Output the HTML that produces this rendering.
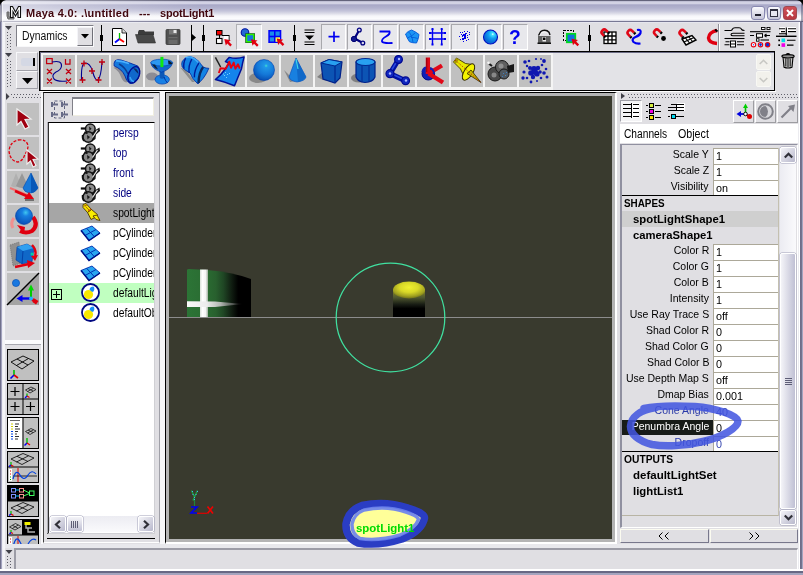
<!DOCTYPE html>
<html><head><meta charset="utf-8">
<style>
*{box-sizing:border-box;margin:0;padding:0}
html,body{width:803px;height:575px;overflow:hidden;background:#e0dfe3;font-family:"Liberation Sans",sans-serif;font-size:11px;color:#000}
.abs{position:absolute}
#win{position:absolute;left:0;top:0;width:803px;height:575px;background:#e0dfe3;overflow:hidden}
#title{left:0;top:0;width:803px;height:23px;background:linear-gradient(90deg,rgba(255,255,255,0.55) 0,rgba(255,255,255,0.35) 60px,rgba(255,255,255,0) 200px),linear-gradient(#64647c 0,#64647c 1px,#b0b0c8 1px,#d2d2e4 2px,#d2d2e4 3.500px,#b4b4d0 4.500px,#aaaac8 5.500px,#b2b2ce 8px,#c4c4da 11px,#dcdce8 13.500px,#f6f6fa 16px,#fcfcfe 19px,#e0e0ea 20.500px,#787894 21px,#787894 22px,#e6e6ee 22px,#e6e6ee 23px)}
#title span{position:absolute;top:7px;transform:scaleX(0.999);transform-origin:0 0;font-weight:bold;font-size:11px;color:#40060e;white-space:pre;letter-spacing:0.35px;text-shadow:1px 1px 0 rgba(255,255,255,0.5)}
.bl{position:absolute;left:0;top:22px;width:5px;height:553px;background:linear-gradient(90deg,#70708c 0,#70708c 1px,#a2a2be 1px,#a2a2be 2.500px,#ececf2 2.500px,#f8f8fb 4px,#f0f0f4 5px)}
.br{position:absolute;left:798px;top:22px;width:5px;height:553px;background:linear-gradient(90deg,#ececf0 0,#ececf0 1px,#fff 1px,#fff 2px,#6c6c88 2px,#74748e 3.500px,#a4a4c0 3.500px,#a4a4c0 5px)}
.bb{position:absolute;left:0;top:569px;width:803px;height:6px;background:linear-gradient(#fff 0,#fff 2px,#686884 2.500px,#686884 4px,#a4a4be 4.500px,#a4a4be 6px)}
.sunk{border:1px solid;border-color:#9d9da1 #fff #fff #9d9da1}
.rais{border:1px solid;border-color:#fff #9d9da1 #9d9da1 #fff}
.vsep{position:absolute;top:25px;width:1px;height:26px;background:#000}
.vsep i{position:absolute;left:-1px;top:10px;width:3px;height:6px;background:#000}
.sb{position:absolute;top:24px;width:25px;height:26px;background:#e8e8ec;border:1px solid;border-color:#a8a8ac #fff #fff #a8a8ac}
.shi{position:absolute;top:55px;width:32px;height:32px;background:#c0c0c0}
#vp{left:165px;top:92px;width:452px;height:452px;background:#b4b4b4;border:1px solid #000;border-right:2px solid #fff;border-bottom:2px solid #fff}
#vpi{left:169px;top:96px;width:443px;height:443px;background:#393a2e;overflow:hidden}
.orow{position:absolute;left:49px;width:105px;height:20px;white-space:nowrap;overflow:hidden}
.orow span{position:absolute;left:63.500px;top:3px;font-size:12px;transform:scaleX(0.855);transform-origin:0 0}
.cam{color:#000080}
.crow{position:absolute;left:622px;width:157px;height:16px}
.crow .l{position:absolute;right:70px;top:0px;font-size:11px;white-space:nowrap;transform:scaleX(0.955);transform-origin:100% 0}
.crow .v{position:absolute;left:91px;top:0;width:66px;height:16px;background:#fff;border:1px solid;border-color:#aca899 #aca899 #fff #aca899;border-bottom:0;font-size:11px;padding:1px 0 0 2px;line-height:12px}
.crow .v i{font-style:normal;display:inline-block;transform:scaleX(0.98);transform-origin:0 0}
.chd b{display:inline-block;transform-origin:0 0}
.chd{position:absolute;left:622px;width:157px;height:16px;font-weight:bold;font-size:11px;padding:1px 0 0 2px;white-space:nowrap}
.mn{transform-origin:0 0}
.tb{position:absolute;left:7px;width:32px;height:32px;background:#c0c0c0}
.ql{position:absolute;left:7px;width:32px;height:32px;background:#c0c0c0;border:1px solid #000;overflow:hidden}
svg{position:absolute;overflow:visible}
</style></head><body>
<div id="win">
<div id="title" class="abs"><span style="left:26px;letter-spacing:0.24px">Maya 4.0: .\untitled</span><span style="left:139px;letter-spacing:0.1px">---</span><span style="left:160px;letter-spacing:-0.2px">spotLight1</span></div>
<!-- maya icon -->
<svg style="left:6px;top:4px" width="17" height="16" viewBox="0 0 17 16"><path d="M1 12 L1 8 L3 8 L3 13 L8 13 L8 15 L2 15 Z" fill="#888" stroke="#666" stroke-width="1"/><path d="M4.5 13.5 V2.5 H6.5 L9.5 8 L12.5 2.5 H14.5 V13.5 H12 V7.5 L9.5 12 L7 7.5 V13.5 Z" fill="#fff" stroke="#101010" stroke-width="1.1"/></svg>
<!-- window buttons -->
<div class="abs" style="left:751px;top:6px;width:14px;height:14px;border-radius:3px;border:1px solid #8888b0;background:linear-gradient(#fafafe,#c4c4d8)"><div class="abs" style="left:3px;top:7px;width:6px;height:2px;background:#202030"></div></div>
<div class="abs" style="left:767px;top:6px;width:14px;height:14px;border-radius:3px;border:1px solid #8888b0;background:linear-gradient(#fafafe,#c4c4d8)"><div class="abs" style="left:2px;top:2px;width:8px;height:8px;border:1px solid #303040;border-top-width:2px;background:#e8e8f2"></div></div>
<div class="abs" style="left:783px;top:6px;width:14px;height:14px;border-radius:3px;border:1px solid #a04850;background:linear-gradient(#d05058,#b83840)"><svg style="left:2px;top:2px" width="8" height="8" viewBox="0 0 8 8"><path d="M1 1 L7 7 M7 1 L1 7" stroke="#fff" stroke-width="2"/></svg></div>

<!-- status line handle -->
<svg style="left:4px;top:24px" width="12" height="68" viewBox="0 0 12 68">
<path d="M1 2 H8 L4.5 6 Z" fill="#404048"/><path d="M1 29 H8 L4.5 33 Z" fill="#404048"/>
<g fill="#5c5c66" shape-rendering="crispEdges"><rect x="3" y="8" width="1" height="1"/><rect x="6" y="9.5" width="1" height="1"/><rect x="3" y="11" width="1" height="1"/><rect x="6" y="13" width="1" height="1"/><rect x="3" y="14" width="1" height="1"/><rect x="6" y="16" width="1" height="1"/><rect x="3" y="17" width="1" height="1"/><rect x="6" y="19" width="1" height="1"/><rect x="3" y="20" width="1" height="1"/><rect x="6" y="22" width="1" height="1"/><rect x="3" y="23" width="1" height="1"/><rect x="6" y="25" width="1" height="1"/>
<rect x="3" y="35" width="1" height="1"/><rect x="6" y="37" width="1" height="1"/><rect x="3" y="38" width="1" height="1"/><rect x="6" y="40" width="1" height="1"/><rect x="3" y="41" width="1" height="1"/><rect x="6" y="43" width="1" height="1"/><rect x="3" y="44" width="1" height="1"/><rect x="6" y="46" width="1" height="1"/><rect x="3" y="47" width="1" height="1"/><rect x="6" y="49" width="1" height="1"/><rect x="3" y="50" width="1" height="1"/><rect x="6" y="52" width="1" height="1"/><rect x="3" y="53" width="1" height="1"/><rect x="6" y="55" width="1" height="1"/><rect x="3" y="56" width="1" height="1"/><rect x="6" y="58" width="1" height="1"/><rect x="3" y="59" width="1" height="1"/><rect x="6" y="61" width="1" height="1"/><rect x="3" y="62" width="1" height="1"/></g></svg>

<!-- Dynamics combo -->
<div class="abs" style="left:16px;top:25px;width:78px;height:22px;background:#fff;border:1px solid;border-color:#808088 #f8f8fa #f8f8fa #808088"></div>
<div class="abs dyn" style="left:22px;top:29px;font-size:12px;color:#101010;transform:scaleX(0.865);transform-origin:0 0">Dynamics</div>
<div class="abs" style="left:77px;top:27px;width:16px;height:19px;background:#e0dfe3;border:1px solid;border-color:#f4f4f8 #707078 #707078 #f4f4f8"></div>
<svg style="left:81px;top:34px" width="8" height="5" viewBox="0 0 8 5"><path d="M0 0 H8 L4 4.500 Z" fill="#000"/></svg>

<div class="vsep" style="left:101px"><i></i></div>
<!-- new file -->
<svg style="left:112px;top:28px" width="15" height="18" viewBox="0 0 15 18"><path d="M0.5 0.5 H10 L14.500 5 V17.500 H0.5 Z" fill="#fff" stroke="#000"/><path d="M10 0.5 V5 H14.500" fill="#ddd" stroke="#000" stroke-width="0.8"/><path d="M7.500 5 V11" stroke="#00c000" stroke-width="1.300"/><path d="M7.500 11 L3 14.500" stroke="#0000ff" stroke-width="1.800"/><path d="M7.500 11 L12 14" stroke="#ff0000" stroke-width="1.800"/></svg>
<!-- folder -->
<svg style="left:135px;top:29px" width="21" height="15" viewBox="0 0 21 15"><path d="M3 3 L4 1 H9 L10 2.500 H19 V6 H5 L3 12 Z" fill="#3c3c3c"/><path d="M0.5 5.500 H18 L20.500 14 H3 Z" fill="#484848" stroke="#303030" stroke-width="0.6"/></svg>
<!-- floppy -->
<svg style="left:165px;top:29px" width="16" height="16" viewBox="0 0 16 16"><path d="M1 1.500 Q1 0.5 2 0.5 H14 Q15 0.5 15 1.500 V14.500 Q15 15.500 14 15.500 H2 Q1 15.500 1 14.500 Z" fill="#505050" stroke="#383838" stroke-width="0.8"/><rect x="4" y="0.5" width="8" height="5" fill="#777"/><rect x="8.500" y="1" width="3" height="3" fill="#e8e8e8"/><rect x="3.500" y="8" width="9" height="7" fill="#6a6a6a"/><rect x="3.500" y="9.500" width="9" height="1" fill="#444"/></svg>
<div class="vsep" style="left:191px"></div>
<svg style="left:192px;top:34px" width="4" height="8" viewBox="0 0 4 8"><path d="M0 0 L4 3.500 L0 7 Z" fill="#000"/></svg>
<div class="vsep" style="left:203px"><i></i></div>

<!-- select by hierarchy -->
<svg style="left:215px;top:29px" width="18" height="17" viewBox="0 0 18 17"><path d="M4.500 6 V10 M7 6.500 H14 V11" fill="none" stroke="#000" stroke-width="1.100"/><rect x="1.500" y="1.500" width="5.500" height="4.500" fill="#f00000" stroke="#000" stroke-width="1"/><rect x="1.500" y="9.500" width="5.500" height="5" fill="#fff" stroke="#000" stroke-width="1.100"/><rect x="9" y="7" width="4.500" height="4" fill="#fff"/><path transform="translate(9.3,10)" d="M0 0 L6.500 1.300 L4.600 2.800 L7.600 5.800 L6 7.400 L3 4.400 L1.500 6.500 Z" fill="#e00010"/></svg>
<!-- select by object (active) -->
<div class="abs" style="left:236px;top:24px;width:26px;height:26px;background:#ececf0;border:1px solid;border-color:#b0b0b4 #fff #fff #b0b0b4"></div>
<svg style="left:240px;top:28px" width="19" height="18" viewBox="0 0 19 18"><circle cx="5" cy="4.500" r="3.800" fill="#2468d4" stroke="#0010a0" stroke-width="1.100"/><rect x="5.300" y="5.300" width="9.700" height="9.700" fill="#083020"/><rect x="6.500" y="6.500" width="7.300" height="7.300" fill="#1478e0" stroke="#30f000" stroke-width="1.500"/><path transform="translate(11,11.3)" d="M0 0 L6.500 1.300 L4.600 2.800 L7.600 5.800 L6 7.400 L3 4.400 L1.500 6.500 Z" fill="#e00010"/></svg>
<!-- select by component -->
<svg style="left:268px;top:30px" width="18" height="16" viewBox="0 0 18 16"><rect x="0.300" y="0" width="13" height="13" fill="#0000f8"/><rect x="1.800" y="1.500" width="4.200" height="4.200" fill="#1c8ce8"/><rect x="7.500" y="1.500" width="4.200" height="4.200" fill="#1c8ce8"/><rect x="1.800" y="7.300" width="4.200" height="4.200" fill="#1c8ce8"/><rect x="7.500" y="7.300" width="4.500" height="4.500" fill="#ffff50"/><path transform="translate(8.7,8.5)" d="M0 0 L6.500 1.300 L4.600 2.800 L7.600 5.800 L6 7.400 L3 4.400 L1.500 6.500 Z" fill="#e00010"/></svg>
<div class="vsep" style="left:294px"><i></i></div>
<!-- menu icon -->
<svg style="left:304px;top:29px" width="11" height="17" viewBox="0 0 11 17"><path d="M0.5 1 H10.500 M0.5 3.500 H10.500 M0.5 13 H10.500 M0.5 15.500 H10.500" stroke="#000" stroke-width="1.200"/><path d="M1 6.500 H10 L5.500 11 Z" fill="#000"/></svg>
<!-- mask buttons -->
<div class="sb" style="left:321px"></div><div class="sb" style="left:347px"></div><div class="sb" style="left:373px"></div><div class="sb" style="left:399px"></div><div class="sb" style="left:425px"></div><div class="sb" style="left:451px"></div><div class="sb" style="left:477px"></div><div class="sb" style="left:503px"></div>
<svg style="left:328px;top:31px" width="12" height="12" viewBox="0 0 12 12"><path d="M6 0.5 V11 M0.5 5.700 H11.500" stroke="#0000f0" stroke-width="1.700" fill="none"/></svg>
<svg style="left:350px;top:28px" width="18" height="18" viewBox="0 0 18 18"><path d="M9 2.500 L4.500 10.500 L12 14.500" stroke="#000080" stroke-width="2.200" fill="none" stroke-linejoin="round"/><circle cx="9.300" cy="2" r="1.900" fill="#d8d8ec" stroke="#000080" stroke-width="1.300"/><circle cx="4" cy="11" r="2.700" fill="#101890" stroke="#000070" stroke-width="1"/><circle cx="12.800" cy="15" r="1.900" fill="#d8d8ec" stroke="#000080" stroke-width="1.300"/></svg>
<svg style="left:378px;top:30px" width="16" height="15" viewBox="0 0 16 15"><path d="M1.500 1.500 H11.500 Q12.500 4 8 6.500 Q3.500 9 4 11.500 Q5 13.500 14.500 13" stroke="#0000f0" stroke-width="1.800" fill="none"/></svg>
<svg style="left:404px;top:29px" width="17" height="16" viewBox="0 0 17 16"><path d="M1.500 5 Q4 2 7.500 1 Q11.500 2.500 15 5.500 Q14.500 10 12.500 14 Q8.500 14 5.500 12.800 Q3 9 1.500 5 Z" fill="#1c94f4" stroke="#0058d8" stroke-width="0.9"/><path d="M4.500 3 Q8 5.500 9 13.500 M11.500 3.500 Q8.500 7 3.500 9 M7 8.500 Q10 8 13.800 9.500" stroke="#0058d8" stroke-width="0.8" fill="none"/></svg>
<svg style="left:429px;top:28px" width="17" height="18" viewBox="0 0 17 18"><path d="M0.500 5 H16.500 M0.500 11 H16.500 M3.500 1 V16.500 M12.700 1 V16.500" stroke="#0000f0" stroke-width="1.400" fill="none"/><g fill="#0000f0"><rect x="2.500" y="0" width="2" height="2"/><rect x="11.700" y="0" width="2" height="2"/><rect x="2.500" y="15.500" width="2" height="2"/><rect x="11.700" y="15.500" width="2" height="2"/><rect x="0" y="4" width="2" height="2"/><rect x="15" y="4" width="2" height="2"/><rect x="0" y="10" width="2" height="2"/><rect x="15" y="10" width="2" height="2"/></g></svg>
<svg style="left:457px;top:29px" width="16" height="16" viewBox="0 0 16 16" shape-rendering="crispEdges"><g fill="#0000e8"><rect x="6" y="5" width="3" height="2"/><rect x="7" y="7" width="2" height="3"/><rect x="5" y="9" width="2" height="2"/><rect x="8" y="4" width="2" height="1"/><rect x="5" y="6" width="1" height="2"/><rect x="3" y="3" width="1" height="1"/><rect x="10" y="2" width="1" height="1"/><rect x="12" y="5" width="1" height="1"/><rect x="2" y="7" width="1" height="1"/><rect x="10" y="8" width="1" height="1"/><rect x="3" y="10" width="1" height="1"/><rect x="9" y="11" width="1" height="1"/><rect x="6" y="12" width="1" height="1"/><rect x="4" y="5" width="1" height="1"/><rect x="11" y="10" width="1" height="1"/><rect x="7" y="2" width="1" height="1"/><rect x="10" y="6" width="1" height="1"/><rect x="12" y="3" width="1" height="1"/><rect x="5" y="3" width="1" height="1"/></g></svg>
<svg style="left:483px;top:29px" width="16" height="16" viewBox="0 0 16 16"><defs><radialGradient id="sg" cx="0.66" cy="0.3" r="0.6"><stop offset="0" stop-color="#fff"/><stop offset="0.15" stop-color="#40e0ff"/><stop offset="0.5" stop-color="#10a0f0"/><stop offset="1" stop-color="#0868d8"/></radialGradient></defs><circle cx="7.500" cy="8" r="7" fill="url(#sg)" stroke="#0010c0" stroke-width="1.100"/></svg>
<div class="abs" style="left:509px;top:26px;font-weight:bold;font-size:20px;color:#0000f0;line-height:22px;transform:scaleX(0.96);transform-origin:0 0">?</div>
<!-- lock -->
<svg style="left:537px;top:29px" width="15" height="16" viewBox="0 0 15 16"><path d="M1.500 6.500 L3.500 2.800 Q5 1.300 7.500 1.300 Q10.500 1.300 12 3.200 L13 6" stroke="#101010" stroke-width="1.400" fill="none"/><path d="M3 6.500 L4.500 4 Q6 3 7.500 3 Q9.500 3 10.800 4.500" stroke="#f4f4f4" stroke-width="1" fill="none"/><rect x="1" y="7" width="12.500" height="7" fill="#606060"/><rect x="5.500" y="8" width="3.500" height="4.500" fill="#f0f0f0"/><rect x="6" y="8.500" width="2.500" height="2.500" fill="#000"/><rect x="0.500" y="13.500" width="13.500" height="1.500" fill="#101010"/></svg>
<!-- highlight select -->
<svg style="left:561px;top:29px" width="20" height="19" viewBox="0 0 20 19"><rect x="2.500" y="1.500" width="10" height="10" fill="none" stroke="#000" stroke-width="1" stroke-dasharray="2 1.330" shape-rendering="crispEdges"/><rect x="5.800" y="4.800" width="8.500" height="8.500" fill="#1070e0" stroke="#00d820" stroke-width="1.700"/><path transform="translate(10.5,9.8)" d="M0 0 L6.500 1.300 L4.600 2.800 L7.600 5.800 L6 7.400 L3 4.400 L1.500 6.500 Z" fill="#e00010"/></svg>
<div class="vsep" style="left:589px"><i></i></div>
<!-- snap grid -->
<svg style="left:599px;top:27px" width="18" height="19" viewBox="0 0 18 19"><rect x="5" y="5" width="12" height="11.500" fill="#fff" stroke="#000" stroke-width="1.300"/><path d="M9 5 V16.500 M13 5 V16.500 M5 9 H17 M5 12.800 H17" stroke="#000" stroke-width="1.300"/><g transform="translate(5.5,5.5) rotate(-45)"><path d="M-2.700 2.300 V-0.300 A2.700 2.700 0 0 1 2.700 -0.300 V2.300" stroke="#e00818" stroke-width="2.500" fill="none"/><path d="M-2.700 2.300 V4.200 M2.700 2.300 V4.200" stroke="#000" stroke-width="2.500"/></g></svg>
<!-- snap curve -->
<svg style="left:625px;top:27px" width="18" height="20" viewBox="0 0 18 20"><path d="M12 3 Q16.500 2 15.500 6 Q14.500 8.500 10.500 10 Q6 12 8.500 15 Q11 17 15.500 16.500" stroke="#0000f0" stroke-width="2.200" fill="none"/><g transform="translate(5.5,6.0) rotate(-45)"><path d="M-2.700 2.300 V-0.300 A2.700 2.700 0 0 1 2.700 -0.300 V2.300" stroke="#e00818" stroke-width="2.500" fill="none"/><path d="M-2.700 2.300 V4.200 M2.700 2.300 V4.200" stroke="#000" stroke-width="2.500"/></g></svg>
<!-- snap point -->
<svg style="left:652px;top:27px" width="16" height="16" viewBox="0 0 16 16"><g transform="translate(5.0,5.5) rotate(-45)"><path d="M-2.700 2.300 V-0.300 A2.700 2.700 0 0 1 2.700 -0.300 V2.300" stroke="#e00818" stroke-width="2.500" fill="none"/><path d="M-2.700 2.300 V4.200 M2.700 2.300 V4.200" stroke="#000" stroke-width="2.500"/></g><circle cx="11.500" cy="11.500" r="2.400" fill="#000"/></svg>
<!-- snap surface -->
<svg style="left:677px;top:27px" width="20" height="19" viewBox="0 0 20 19"><path d="M5 12 L15 8.500 L19 13 L9 18 Z" fill="#fff" stroke="#000" stroke-width="1.400"/><path d="M8.500 11 L12.500 16 M11.500 9.500 L15.500 14.500 M7 15 L17 10.500" stroke="#000" stroke-width="1.200"/><g transform="translate(5.5,6.0) rotate(-45)"><path d="M-2.700 2.300 V-0.300 A2.700 2.700 0 0 1 2.700 -0.300 V2.300" stroke="#e00818" stroke-width="2.500" fill="none"/><path d="M-2.700 2.300 V4.200 M2.700 2.300 V4.200" stroke="#000" stroke-width="2.500"/></g></svg>
<!-- snap live (cut) -->
<svg style="left:706px;top:28px" width="12" height="18" viewBox="0 0 12 18"><path d="M11 2.500 Q3 4 2.500 10 Q3 15 11 15.500" stroke="#e00010" stroke-width="3.400" fill="none"/><path d="M9 1.500 L11.500 3.500" stroke="#000" stroke-width="2"/></svg>
<div class="abs" style="left:718px;top:24px;width:1px;height:27px;background:#909098"></div>
<div class="abs" style="left:719px;top:24px;width:1px;height:27px;background:#fff"></div>
<!-- 3 right icons -->
<svg style="left:724px;top:27px" width="21" height="21" viewBox="0 0 21 21"><path d="M0.500 3.500 H7 Q8 3.300 8.500 2 Q9 0.700 11 0.700 H15 Q17 0.700 17.300 2 Q17.800 3.500 20.500 3.500" stroke="#000" stroke-width="1.100" fill="none"/><path d="M20.500 6.300 H9 Q7 6.300 7 7.500 Q7 8.800 9 8.800 H20.500" stroke="#000" stroke-width="1.100" fill="none"/><path d="M0.500 11.500 H20.500" stroke="#000" stroke-width="1.100"/><rect x="6.500" y="14" width="5" height="6" fill="#fff" stroke="#000" stroke-width="1"/><path d="M1.500 14.700 H5.500 M0.500 17.800 H5.500 M13 14.700 H20 M13 17.800 H20 M6.500 17 H11.500" stroke="#000" stroke-width="1.100"/></svg>
<svg style="left:750px;top:27px" width="21" height="21" viewBox="0 0 21 21"><rect x="11.500" y="0.500" width="3.500" height="2" fill="#fff" stroke="#000" stroke-width="0.9"/><rect x="17" y="0.500" width="3" height="2" fill="#fff" stroke="#000" stroke-width="0.9"/><path d="M0 4.700 H20.500" stroke="#000" stroke-width="1.100"/><path d="M0 8.500 H4 M14.500 8.500 H20 M14.500 8.500 L16.500 7 M14.500 8.500 L16.500 10" stroke="#000" stroke-width="1.100" fill="none"/><rect x="6.500" y="6.700" width="6" height="3.600" fill="#fff" stroke="#000" stroke-width="1"/><rect x="6.500" y="11.700" width="2.500" height="2.500" fill="#fff" stroke="#000" stroke-width="0.900"/><path d="M10.500 13 H19" stroke="#000" stroke-width="1.100"/><circle cx="3.500" cy="17.700" r="2.200" fill="#fff" stroke="#e80010" stroke-width="1.100"/><circle cx="3.500" cy="17.700" r="0.700" fill="#2060ff"/><circle cx="10.500" cy="17.700" r="2.200" fill="#a0c8ff" stroke="#e80010" stroke-width="1.100"/><path d="M10.500 16.200 V19.200 M9 17.700 H12" stroke="#0030e0" stroke-width="0.900"/><circle cx="17.600" cy="17.700" r="2.200" fill="#0030e0" stroke="#e80010" stroke-width="1.100"/></svg>
<svg style="left:776px;top:27px" width="21" height="21" viewBox="0 0 21 21"><rect x="4" y="0" width="16" height="6" fill="#fff"/><path d="M3 1.800 H9 M12 1.800 H20 M5 4.600 H9 M12 4.600 H20 M3 6.800 H10" stroke="#000" stroke-width="1.100"/><path d="M10.300 0.500 V8.500" stroke="#000" stroke-width="1.200"/><path d="M0 9.300 H20.500" stroke="#000" stroke-width="1.400"/><rect x="5.500" y="11.500" width="3.600" height="3.600" fill="#00e0e8"/><rect x="5.500" y="16.300" width="3.600" height="3.600" fill="#f000e8"/><rect x="2.300" y="12.500" width="1.700" height="1.700" fill="#000"/><rect x="2.300" y="17.300" width="1.700" height="1.700" fill="#000"/><path d="M11 13.300 H19.500 M11 18.100 H17.500" stroke="#000" stroke-width="1.100"/></svg>
<!-- shelf left buttons -->
<div class="abs" style="left:16px;top:52px;width:22px;height:19px;background:#e0dfe3;border:1px solid;border-color:#f8f8fa #a0a0a8 #a0a0a8 #f8f8fa"></div>
<div class="abs" style="left:21px;top:58px;width:14px;height:8px;background:#d4d8e4;border-right:2px solid #000;border-radius:2px 0 0 2px"></div>
<div class="abs" style="left:16px;top:71px;width:22px;height:18px;background:#e0dfe3;border:1px solid;border-color:#f8f8fa #a0a0a8 #a0a0a8 #f8f8fa"></div>
<svg style="left:22px;top:78px" width="11" height="6" viewBox="0 0 11 6"><path d="M0 0 H11 L5.500 6 Z" fill="#000"/></svg>
<!-- shelf frame -->
<div class="abs" style="left:39px;top:51px;width:736px;height:40px;background:#e3e3e7;border:1px solid #000"></div><div class="abs" style="left:40px;top:52px;width:734px;height:1px;background:#6c6c84"></div><div class="abs" style="left:40px;top:52px;width:1px;height:38px;background:#6c6c84"></div>
<div class="abs" style="left:41px;top:53px;width:512px;height:37px;background:#f4f4f4"></div>
<div class="abs" style="left:40px;top:91px;width:736px;height:1px;background:#fff"></div>
<!-- icons -->
<div class="shi" style="left:43px"><svg width="32" height="32" viewBox="0 0 32 32"><g stroke="#c00010" stroke-width="1.250" fill="none"><rect x="3.600" y="3.600" width="5.600" height="5"/><path d="M22.500 4 V9 H27 V4"/><path d="M4 14 L9 19 M9 14 L4 19 M23 14 L28 19 M28 14 L23 19 M4 23.500 L9 28.500 M9 23.500 L4 28.500 M23 23.500 L28 28.500 M28 23.500 L23 28.500"/></g><path d="M9 7 Q19 5 18.500 11 Q18 15 13 17 Q8 20 11 24 Q14 27 24 26" stroke="#000090" stroke-width="1.100" fill="none"/></svg></div>
<div class="shi" style="left:77px"><svg width="32" height="32" viewBox="0 0 32 32"><path d="M4.500 25 Q4 8 8 8 Q13 8 15.500 16 Q18 26 21 25 Q24 22 25 7" stroke="#000090" stroke-width="1.100" fill="none"/><g stroke="#c00010" stroke-width="1.300"><path d="M4 8.500 H10 M7 5.500 V11.500 M12 16 H18 M15 13 V19 M2.500 25 H8.500 M5.500 22 V28 M18.500 25 H24.500 M21.500 22 V28 M22 7 H28 M25 4 V10"/></g></svg></div>
<div class="shi" style="left:111px"><svg width="32" height="32" viewBox="0 0 32 32"><path d="M2.400 12.800 Q8 16 10 22 Q12 27 15.400 27.600 L19 26 L8 11 Z" fill="#8c8c94"/><path d="M4.100 5.800 Q6 4 10 5 Q18 7.500 26.800 11 Q30 17 27 24 Q24 29 19 28.500 Q15 26 14 21 Q11 14 3.200 11 Q2.500 8 4.100 5.800 Z" fill="#1478dc" stroke="#0028a0" stroke-width="0.9"/><path d="M5 6 Q10 5.500 18 8.500" stroke="#48b0ff" stroke-width="1.700" fill="none"/><path d="M8 9 Q14 12 17 19" stroke="#0c3c90" stroke-width="1.500" fill="none"/><ellipse cx="22.800" cy="19.800" rx="5.300" ry="8.600" fill="#1068cc" stroke="#000c90" stroke-width="1.400" transform="rotate(24 22.800 19.800)"/><path d="M22 13 Q27 13 27.500 19 Q25 17 22 13 Z" fill="#0a2c68"/><path d="M19 22 Q20 26 23 26.500" stroke="#38a0f4" stroke-width="1.500" fill="none"/></svg></div>
<div class="shi" style="left:145px"><svg width="32" height="32" viewBox="0 0 32 32"><ellipse cx="7" cy="21.500" rx="6" ry="4" fill="#8c8c94"/><ellipse cx="17.200" cy="24.500" rx="7.200" ry="4.600" fill="#1880e4" stroke="#0040b0" stroke-width="0.700"/><path d="M14.500 16 L14.800 23 Q17 24.500 19.500 23 L19.500 16 Z" fill="#0c58b8"/><path d="M5.800 7.600 Q6.500 14 16.500 17.200 Q26.500 14 27.600 7.600 Z" fill="#1068cc" stroke="#0038a8" stroke-width="0.700"/><ellipse cx="16.700" cy="7.600" rx="10.900" ry="3.400" fill="#2c98f0" stroke="#0048b8" stroke-width="0.700"/><path d="M7 9.500 Q9 13 13 14.500 L10 9.500 Z" fill="#0a2440"/><path d="M23 5.500 Q27 6.500 27.300 9 L23.500 9.500 Z" fill="#0a1c30"/><rect x="15.400" y="1.900" width="3" height="10.200" fill="#10e810"/><path d="M19 22 Q20.500 26 22.500 28" stroke="#0030a0" stroke-width="1" fill="none"/></svg></div>
<div class="shi" style="left:179px"><svg width="32" height="32" viewBox="0 0 32 32"><path d="M1.500 12.800 L13 27 L16 27 L6 14 Z" fill="#8c8c8c"/><path d="M3.200 6.300 Q6 2 11.100 1.500 Q16 2.500 19.800 6.300 Q22 9.500 24.200 12 Q27 13.500 29.800 13.300 Q27.500 19 24.200 23.300 Q21.500 26.500 18.900 29 Q16 26 13.700 23.300 L11.100 18 Q6 15.500 3.200 12 Q2.300 9 3.200 6.300 Z" fill="#1484e4" stroke="#0030a8" stroke-width="0.9"/><path d="M6 3 Q9 1.800 12 2 Q17 4 21 9" stroke="#40a8f8" stroke-width="1.600" fill="none"/><path d="M6.700 3.200 Q4 8 5 13.700 M12.800 4.100 Q9 11 10.200 18 M20.200 7.600 Q15 15 15.400 22.400" stroke="#001c98" stroke-width="1.400" fill="none"/><path d="M24.200 12 Q20 17 19.500 28" stroke="#0a2860" stroke-width="2.400" fill="none"/></svg></div>
<div class="shi" style="left:213px"><svg width="32" height="32" viewBox="0 0 32 32"><path d="M16.300 2.400 Q24 4.500 31.100 1.900 Q29.500 8 28.500 13.700 Q25 22 21.500 30.700 Q12 27 2.400 24.600 Q8 20 11.500 15 Q15 10 16.300 7.600 Q14 7.500 12.400 6.700 Q14.500 4 16.300 2.400 Z" fill="#1484ec" stroke="#001098" stroke-width="1.500" stroke-linejoin="round"/><path d="M2.400 2.400 L7.600 12" stroke="#202020" stroke-width="1.500"/><path d="M5.800 18 L7.600 13.200 L12.800 13.700 L16.300 6.700 L18 12.800 L20.700 7.600 L22.400 13.700 L25 9.300 L26.800 13.700" stroke="#e80010" stroke-width="1.900" fill="none" stroke-linejoin="round"/><g fill="#70d0ff"><rect x="12" y="17" width="1" height="1"/><rect x="14" y="19" width="1" height="1"/><rect x="11" y="20" width="1" height="1"/><rect x="16" y="18" width="1" height="1"/><rect x="13" y="22" width="1" height="1"/><rect x="10" y="18.500" width="1" height="1"/></g></svg></div>
<div class="shi" style="left:247px"><svg width="32" height="32" viewBox="0 0 32 32"><defs><radialGradient id="g7" cx="0.6" cy="0.3" r="0.7"><stop offset="0" stop-color="#40e0d0"/><stop offset="0.12" stop-color="#2098e8"/><stop offset="0.6" stop-color="#1478d8"/><stop offset="1" stop-color="#0850b4"/></radialGradient></defs><ellipse cx="11" cy="23" rx="9" ry="5" fill="#888"/><circle cx="17" cy="15" r="10.500" fill="url(#g7)" stroke="#0040b0" stroke-width="0.6"/></svg></div>
<div class="shi" style="left:281px"><svg width="32" height="32" viewBox="0 0 32 32"><path d="M3 15 L14 26 L9 27 Z" fill="#888"/><path d="M15 3 L25 22 Q24 26 16 27 Q9 26 8 22 Z" fill="#1880e0" stroke="#0048b8" stroke-width="0.6"/><path d="M15 3 L25 22 Q22 26 17 27 Z" fill="#1068c8"/><path d="M15 4 L17 14" stroke="#40d8e8" stroke-width="1.200"/></svg></div>
<div class="shi" style="left:315px"><svg width="32" height="32" viewBox="0 0 32 32"><path d="M2 22 L8 17 L18 27 L8 25 Z" fill="#808080"/><path d="M6 8 L14 4.500 L27 7 L25 23 L20 28 L8 24 Z" fill="#0c54b4" stroke="#002088" stroke-width="1.200"/><path d="M6 8 L14 4.500 L27 7 L20 11 Z" fill="#28a0f0" stroke="#002890" stroke-width="1"/><path d="M20 11 L20 28" stroke="#002890" stroke-width="1.200"/></svg></div>
<div class="shi" style="left:349px"><svg width="32" height="32" viewBox="0 0 32 32"><ellipse cx="10" cy="23" rx="8" ry="4.500" fill="#808080"/><path d="M7 7 V22 Q9 27 16 27.500 Q24 27 26 22 V7 Z" fill="#0c54b4" stroke="#002088" stroke-width="1.200"/><path d="M13 10 V27 M20 10 V27" stroke="#002890" stroke-width="1"/><ellipse cx="16.500" cy="7" rx="9.500" ry="3.500" fill="#28a0f0" stroke="#002890" stroke-width="1.200"/></svg></div>
<div class="shi" style="left:383px"><svg width="32" height="32" viewBox="0 0 32 32"><path d="M15.500 4.500 L7 18.700 L22.600 25.800" stroke="#0010a0" stroke-width="5.200" fill="none" stroke-linejoin="round"/><path d="M14 6 L7.500 17 M9 19 L21 24.500" stroke="#2848e0" stroke-width="1.500"/><circle cx="15.500" cy="4.500" r="3.900" fill="#1028c0" stroke="#000890" stroke-width="1.200"/><circle cx="16" cy="4" r="1.200" fill="#a8b4ff"/><circle cx="7" cy="18.700" r="4" fill="#1028c0" stroke="#000890" stroke-width="1.200"/><circle cx="7" cy="18.500" r="1.200" fill="#a8b4ff"/><circle cx="22.600" cy="25.800" r="3.900" fill="#1028c0" stroke="#000890" stroke-width="1.200"/><circle cx="23" cy="25.500" r="1.200" fill="#a8b4ff"/></svg></div>
<div class="shi" style="left:417px"><svg width="32" height="32" viewBox="0 0 32 32"><circle cx="11.300" cy="18.700" r="6.300" fill="#1020b8" stroke="#000880" stroke-width="1"/><path d="M10.900 2.500 V19" stroke="#e00818" stroke-width="4.300"/><path d="M11.500 18.500 L25 10.500" stroke="#e00818" stroke-width="4.300"/><path d="M11.500 18.500 L26 27.500" stroke="#e00818" stroke-width="4.300"/><path d="M9.700 3 V17" stroke="#a00010" stroke-width="1.200"/><path d="M5.500 17 Q6 13 9 12.500 M13.500 13 Q17 15 17 19" stroke="#1020b8" stroke-width="2" fill="none"/></svg></div>
<div class="shi" style="left:451px"><svg width="32" height="32" viewBox="0 0 32 32"><path d="M2.500 7 L5.500 3 L14.500 8.500 Q18 9 22 9.800 L12.500 24.800 Q12.500 18 9.500 14 Z" fill="#e8e800" stroke="#403800" stroke-width="0.9"/><path d="M2.500 7 L5.500 3 L8 4.500 L5 8.500 Z" fill="#a89800"/><ellipse cx="17.500" cy="17" rx="4.300" ry="9.300" fill="#f4f400" stroke="#302800" stroke-width="1" transform="rotate(33 17.500 17)"/><path d="M16 18.500 L20 15 L30 27.500 Z" fill="#c8b800" stroke="#302800" stroke-width="0.8"/><path d="M4 5 L29.500 27" stroke="#c02000" stroke-width="0.8" stroke-dasharray="1.500 1.500"/></svg></div>
<div class="shi" style="left:485px"><svg width="32" height="32" viewBox="0 0 32 32"><circle cx="10" cy="19" r="7" fill="#484848" stroke="#181818"/><circle cx="17" cy="12" r="6.500" fill="#606060" stroke="#181818"/><circle cx="19" cy="19" r="5" fill="#505860" stroke="#181818"/><circle cx="9" cy="20" r="2.500" fill="#888"/><circle cx="16" cy="11" r="2.500" fill="#909090"/><path d="M22 11 L29 9 L29 17 L23 18 Z" fill="#181818"/><path d="M3 8 L7 11" stroke="#181818" stroke-width="2"/><circle cx="3.500" cy="8" r="1.400" fill="#f4f4f4"/><g fill="#4080c0"><rect x="18" y="18" width="1" height="1"/><rect x="20" y="20" width="1" height="1"/><rect x="17" y="21" width="1" height="1"/><rect x="21" y="17" width="1" height="1"/></g></svg></div>
<div class="shi" style="left:519px"><svg width="32" height="32" viewBox="0 0 32 32"><g fill="#1018b0"><circle cx="15" cy="14" r="3"/><circle cx="12" cy="18" r="2.800"/><circle cx="18" cy="19" r="2.600"/><circle cx="14" cy="22" r="2.200"/><circle cx="19" cy="13" r="2.200"/><circle cx="11" cy="13" r="2"/><circle cx="16" cy="17" r="3"/><circle cx="6" cy="7" r="1.800"/><circle cx="10" cy="6" r="1.300"/><circle cx="17" cy="4" r="1.100"/><circle cx="25" cy="6" r="1.900"/><circle cx="23" cy="10" r="1.300"/><circle cx="27" cy="14" r="1.300"/><circle cx="25" cy="18" r="1.800"/><circle cx="28" cy="22" r="1.500"/><circle cx="22" cy="23" r="1.300"/><circle cx="5" cy="17" r="1.600"/><circle cx="4" cy="23" r="1.700"/><circle cx="8" cy="23" r="1.300"/><circle cx="12" cy="27" r="1.400"/><circle cx="18" cy="26" r="1"/><circle cx="21" cy="17" r="1.800"/><circle cx="8" cy="11" r="1.200"/><circle cx="22" cy="4" r="0.9"/></g></svg></div>
<!-- scroll buttons -->
<div class="abs" style="left:756px;top:54px;width:15px;height:16px;background:#f2f1ec;border:1px solid #f8f8f4;border-radius:2px"></div>
<svg style="left:759px;top:59px" width="9" height="6" viewBox="0 0 9 6"><path d="M0.7 5 L4.500 1.300 L8.300 5" stroke="#c8c8c4" stroke-width="1.600" fill="none"/></svg>
<div class="abs" style="left:756px;top:71px;width:15px;height:16px;background:#f2f1ec;border:1px solid #f8f8f4;border-radius:2px"></div>
<svg style="left:759px;top:77px" width="9" height="6" viewBox="0 0 9 6"><path d="M0.7 1 L4.500 4.700 L8.300 1" stroke="#c8c8c4" stroke-width="1.600" fill="none"/></svg>
<!-- trash -->
<svg style="left:781px;top:52px" width="14" height="17" viewBox="0 0 14 17"><path d="M2 5 L3 15.200 Q7 16.800 11 15.200 L12 5 Z" fill="#c4c4c4" stroke="#000" stroke-width="1.100"/><path d="M4.800 6.500 V14.500 M7 6.500 V15 M9.200 6.500 V14.500" stroke="#202020" stroke-width="1.100"/><ellipse cx="7" cy="4.300" rx="6.200" ry="1.700" fill="#909090" stroke="#000" stroke-width="1.100"/><path d="M5 2.600 Q7 0.300 9 2.600" stroke="#000" stroke-width="1.100" fill="none"/></svg>
<!-- main separator lines under shelf -->
<!-- toolbox handle -->
<svg style="left:5px;top:93px" width="38" height="8" viewBox="0 0 38 8"><path d="M1 0 L4.500 3.500 L1 7 Z" fill="#404048"/><g fill="#5c5c66" shape-rendering="crispEdges"><rect x="6" y="1" width="1" height="1"/><rect x="9" y="1" width="1" height="1"/><rect x="12" y="1" width="1" height="1"/><rect x="15" y="1" width="1" height="1"/><rect x="18" y="1" width="1" height="1"/><rect x="21" y="1" width="1" height="1"/><rect x="24" y="1" width="1" height="1"/><rect x="27" y="1" width="1" height="1"/><rect x="30" y="1" width="1" height="1"/><rect x="33" y="1" width="1" height="1"/><rect x="8" y="4" width="1" height="1"/><rect x="11" y="4" width="1" height="1"/><rect x="14" y="4" width="1" height="1"/><rect x="17" y="4" width="1" height="1"/><rect x="20" y="4" width="1" height="1"/><rect x="23" y="4" width="1" height="1"/><rect x="26" y="4" width="1" height="1"/><rect x="29" y="4" width="1" height="1"/><rect x="32" y="4" width="1" height="1"/><rect x="35" y="4" width="1" height="1"/></g></svg>
<div class="abs" style="left:41px;top:93px;width:2px;height:452px;background:#f8f8fa"></div>
<!-- tools -->
<div class="tb" style="top:103px"><svg width="32" height="32" viewBox="0 0 32 32"><path d="M10 6 L10 22 L14 18.500 L18 26 L22 24 L18 16.500 L24 16 Z" fill="#a00010" stroke="#f0f0f0" stroke-width="1.200"/></svg></div>
<div class="tb" style="top:137px"><svg width="32" height="32" viewBox="0 0 32 32"><path d="M11 3 Q20 2 21 9 Q21 13 18 17 Q16 24 11 25 Q3 24 2 14 Q3 5 11 3 Z" fill="none" stroke="#e00010" stroke-width="1.300" stroke-dasharray="3 1.500"/><path d="M20 13 L20 27 L23.500 24 L26 30 L29 28.500 L26 22.500 L31 22 Z" fill="#a00010" stroke="#f0f0f0" stroke-width="1.100"/></svg></div>
<div class="tb" style="top:171px"><svg width="32" height="32" viewBox="0 0 32 32"><path d="M9 2 L14 14 Q10 18 4 15 Z" fill="#b0b0b0"/><path d="M15 2 L21 15 Q15 19 9 15 Z" fill="#989898"/><path d="M24 2 L31 17 Q28 22 22 22 Q17 21 16 17 Z" fill="#1878d8" stroke="#0048b0" stroke-width="0.6"/><path d="M24 2 L31 17 Q28 22 24 22 Z" fill="#0858b8"/><path d="M3 17 L20 24" stroke="#f07070" stroke-width="2"/><path d="M8 20 L22 26" stroke="#e00010" stroke-width="2.600"/><path d="M17 28 L27 28 L22 21 Z" fill="#e00010"/><path d="M18 29 H27" stroke="#202020" stroke-width="1"/></svg></div>
<div class="tb" style="top:205px"><svg width="32" height="32" viewBox="0 0 32 32"><defs><radialGradient id="gr" cx="0.6" cy="0.3" r="0.7"><stop offset="0" stop-color="#40c8f0"/><stop offset="0.3" stop-color="#1880e0"/><stop offset="1" stop-color="#0850b8"/></radialGradient></defs><path d="M7 13 Q3 18 6 23" stroke="#f09090" stroke-width="3" fill="none"/><path d="M26 12 Q32 20 25 26 Q19 29 13 26" stroke="#e00010" stroke-width="4" fill="none"/><path d="M10 20 L17 29 L18 22 Z" fill="#e00010"/><circle cx="17" cy="11" r="8.500" fill="url(#gr)" stroke="#0040a8" stroke-width="0.6"/></svg></div>
<div class="tb" style="top:239px"><svg width="32" height="32" viewBox="0 0 32 32"><path d="M3 6 L12 3 L14 24 L6 27 Z" fill="#909090" stroke="#606060" stroke-width="0.6" stroke-dasharray="1 1"/><path d="M10 8 L20 5 L27 9 L25 23 L15 25 L9 21 Z" fill="#1068c8" stroke="#0038a0" stroke-width="0.6"/><path d="M10 8 L20 5 L27 9 L16 12 Z" fill="#30a0f0"/><path d="M16 12 L15 25" stroke="#0038a0" stroke-width="0.8"/><path d="M25 6 Q30 11 28 17" stroke="#e00010" stroke-width="2.400" fill="none"/><path d="M24 17 L31 16 L28 22 Z" fill="#e00010"/><path d="M8 28 L22 25" stroke="#e00010" stroke-width="2.600"/><path d="M20 21 L28 24 L21 29 Z" fill="#e00010"/><circle cx="25" cy="15" r="1.500" fill="#00d0a0"/></svg></div>
<div class="tb" style="top:273px"><svg width="32" height="32" viewBox="0 0 32 32"><path d="M0 32 L32 0 V32 Z" fill="#a4a4a4"/><path d="M0 32 L32 0" stroke="#000" stroke-width="1.400"/><circle cx="9" cy="10" r="3.600" fill="#1878e0" stroke="#0048b0" stroke-width="0.600"/><path d="M24 16 V25" stroke="#00c800" stroke-width="2"/><path d="M21 17.500 L24 11.500 L27 17.500 Z" fill="#00d800"/><path d="M14 25.500 H23" stroke="#0000f0" stroke-width="2.400"/><path d="M15.500 22 L9.500 25.500 L15.500 29 Z" fill="#0000f0"/><path d="M25 26.500 L28 28.500" stroke="#e00010" stroke-width="2.400"/><path d="M26.500 25 L31.500 28 L29 31.500 L25.500 29 Z" fill="#e00010"/><circle cx="24" cy="25.500" r="1.900" fill="#20b0ff"/></svg></div>
<!-- gap separator -->
<div class="abs" style="left:5px;top:340px;width:36px;height:4px;background:#fbfbfd"></div>
<div class="abs" style="left:5px;top:344px;width:36px;height:1px;background:#a8a8b0"></div>
<!-- quick layout -->
<div class="ql" style="top:349px"><svg width="30" height="30" viewBox="0 0 30 30"><path d="M3 12 L15 6 L26 11 L14 19 Z M9 9 L20 15 M20.500 8.500 L8.500 15.500" fill="none" stroke="#000" stroke-width="0.9"/><path d="M6 20 V25" stroke="#00c000" stroke-width="1.600"/><path d="M6 25 L2.500 28.500" stroke="#0000f0" stroke-width="1.600"/><path d="M6 25 L10 28" stroke="#e00000" stroke-width="1.600"/></svg></div>
<div class="ql" style="top:383px"><svg width="30" height="30" viewBox="0 0 30 30"><path d="M15 0 V30 M0 15 H30" stroke="#000" stroke-width="1"/><path d="M7 3 V12 M2.500 7.500 H11.500 M7 18 V27 M2.500 22.500 H11.500 M22.500 18 V27 M18 22.500 H27" stroke="#000" stroke-width="1.200"/><path d="M17.500 6 L23 3 L28 5.500 L22 9 Z M20 4.500 L25 7 M25.500 4.300 L19.500 7.500" fill="none" stroke="#000" stroke-width="0.7"/><path d="M19 9.500 V12" stroke="#00c000" stroke-width="1.300"/><path d="M19 12 L17 14" stroke="#0000f0" stroke-width="1.300"/><path d="M19 12 L21.500 13.500" stroke="#e00000" stroke-width="1.300"/></svg></div>
<div class="ql" style="top:417px"><svg width="30" height="30" viewBox="0 0 30 30"><rect x="0" y="0" width="14.500" height="30" fill="#fff"/><path d="M15 0 V30" stroke="#000" stroke-width="1"/><path d="M2 2.500 H12" stroke="#404040" stroke-width="0.8"/><g stroke-width="1"><path d="M3 6 H5" stroke="#d0d000"/><path d="M3 8.500 H5" stroke="#d0d000"/><path d="M3 11 H5" stroke="#d0d000"/><path d="M3 13.500 H5" stroke="#0040e0"/><path d="M3 16 H5" stroke="#0040e0"/><path d="M3 18.500 H5" stroke="#0040e0"/><path d="M3 21 H5" stroke="#0040e0"/><path d="M7 6 H11 M7 8.500 H10 M7 11 H12 M7 13.500 H10 M7 16 H9 M7 18.500 H11 M7 21 H10" stroke="#303030"/></g><path d="M17.500 13.500 L23 10.500 L28 13 L22 16.500 Z M20 12 L25 14.500 M25.500 11.800 L19.500 15" fill="none" stroke="#000" stroke-width="0.7"/><path d="M19 20 V25" stroke="#00c000" stroke-width="1.400"/><path d="M19 25 L16.500 27.500" stroke="#0000f0" stroke-width="1.400"/><path d="M19 25 L22 27" stroke="#e00000" stroke-width="1.400"/></svg></div>
<div class="ql" style="top:451px"><svg width="30" height="30" viewBox="0 0 30 30"><path d="M0 15 H30" stroke="#000" stroke-width="1"/><path d="M3 7 L15 1.500 L26 6 L14 12.500 Z M9 4.300 L20 9.500 M20.500 3.800 L8.500 10" fill="none" stroke="#000" stroke-width="0.8"/><path d="M3 10 V13" stroke="#00c000" stroke-width="1.200"/><path d="M3 13 L1 14.500" stroke="#0000f0" stroke-width="1.200"/><path d="M3 13 L5.500 14.500" stroke="#e00000" stroke-width="1.200"/><rect x="1" y="17" width="3" height="12" fill="#fff"/><path d="M2 19 H3 M2 22 H3" stroke="#e00000" stroke-width="1"/><path d="M2 25 H3 M2 27.500 H3" stroke="#00a000" stroke-width="1"/><path d="M10 16 V30" stroke="#e00000" stroke-width="1"/><path d="M5 24 H29" stroke="#000" stroke-width="0.8"/><path d="M5 27 Q8 16 12 23 Q16 30 20 23 Q24 17 28 22" stroke="#0040e0" stroke-width="1.200" fill="none"/></svg></div>
<div class="ql" style="top:485px"><svg width="30" height="30" viewBox="0 0 30 30"><rect x="0" y="0" width="30" height="15" fill="#000"/><path d="M0 15 H30" stroke="#000" stroke-width="1"/><g fill="none" stroke-width="1"><rect x="3.500" y="2.500" width="4" height="3.500" stroke="#8090ff"/><rect x="3.500" y="8.500" width="4" height="3.500" stroke="#8090ff"/><rect x="11.500" y="2.500" width="4" height="3.500" stroke="#ff9090"/><rect x="11.500" y="8.500" width="4" height="3.500" stroke="#ff9090"/><rect x="21.500" y="5" width="4.500" height="4.500" stroke="#40ff60"/><path d="M7.500 4 H11.500 M7.500 10 H11.500" stroke="#00c0ff"/><path d="M15.500 4 L21.500 7 M15.500 10 L21.500 7.500" stroke="#40ff60"/></g><path d="M3 22 L15 16.500 L26 21 L14 27.500 Z M9 19.300 L20 24.500 M20.500 18.800 L8.500 25" fill="none" stroke="#000" stroke-width="0.8"/><path d="M3 25 V28" stroke="#00c000" stroke-width="1.200"/><path d="M3 28 L1 29.500" stroke="#0000f0" stroke-width="1.200"/><path d="M3 28 L5.500 29.500" stroke="#e00000" stroke-width="1.200"/></svg></div>
<div class="ql" style="top:519px;height:26px;border-bottom:0"><svg width="30" height="30" viewBox="0 0 30 30"><rect x="14.500" y="0" width="15.500" height="15" fill="#000"/><path d="M0 15 H30 M14.500 0 V15" stroke="#000" stroke-width="1"/><path d="M1.500 7 L7.500 3.500 L13 6.500 L7 10 Z M4.500 5.300 L10 8.300 M10.300 5 L4.300 8.500" fill="none" stroke="#000" stroke-width="0.7"/><path d="M3 10 V12.500" stroke="#00c000" stroke-width="1.200"/><path d="M3 12.500 L1.500 14" stroke="#0000f0" stroke-width="1.200"/><path d="M3 12.500 L5 13.500" stroke="#e00000" stroke-width="1.200"/><rect x="16.500" y="2" width="6" height="3" fill="#f0f000"/><path d="M18 5 V8 H24 M20 8 V12 H27" stroke="#b0b0b0" stroke-width="1.400" fill="none"/><rect x="1" y="17" width="3" height="12" fill="#fff"/><path d="M2 19 H3 M2 22 H3" stroke="#e00000" stroke-width="1"/><path d="M10 16 V30" stroke="#e00000" stroke-width="1"/><path d="M5 27 Q8 14 12 22 Q16 30 20 24 Q24 17 28 20" stroke="#0040e0" stroke-width="1.200" fill="none"/></svg></div>
<!-- outliner panel -->
<div class="abs" style="left:43px;top:92px;width:117px;height:451px;background:#e0dfe3;border:1px solid;border-color:#000 #a0a0a8 #fff #404040"></div>
<div class="abs" style="left:160px;top:92px;width:5px;height:452px;background:#f6f6f8"></div>
<!-- search icon -->
<svg style="left:49.500px;top:100px" width="20" height="19" viewBox="0 0 20 18"><rect x="4.500" y="0.5" width="10" height="17" fill="none" stroke="#606480" stroke-width="1" stroke-dasharray="3 2"/><g fill="#686c88"><rect x="1" y="1.500" width="2" height="5"/><rect x="3" y="3" width="5" height="2"/><rect x="11" y="1.500" width="2" height="5"/><rect x="13" y="3" width="5" height="2"/><rect x="1" y="11.500" width="2" height="5"/><rect x="3" y="13" width="5" height="2"/><rect x="11" y="11.500" width="2" height="5"/><rect x="13" y="13" width="5" height="2"/></g></svg>
<div class="abs" style="left:72px;top:97px;width:82px;height:19px;background:#fff;border:1px solid;border-color:#808088 #f0eee0 #f0eee0 #808088;border-top-width:2px"></div>
<!-- list -->
<div class="abs" style="left:47px;top:122px;width:108px;height:412px;background:#fff;border:1px solid;border-color:#000 #d0d0d4 #d0d0d4 #000;border-left-width:2px;border-left-color:#303030"></div><div class="abs" style="left:47px;top:122px;width:1px;height:411px;background:#b0b0b8"></div>
<div class="abs" style="left:47px;top:538px;width:108px;height:1px;background:#000"></div>
<div class="orow" style="top:203px;background:#a6a6a6"></div>
<div class="orow" style="top:283px;background:#c0ffc0"></div>
<div class="orow" style="top:123px"><span class="cam">persp</span></div>
<div class="orow" style="top:143px"><span class="cam">top</span></div>
<div class="orow" style="top:163px"><span class="cam">front</span></div>
<div class="orow" style="top:183px"><span class="cam">side</span></div>
<div class="orow" style="top:203px"><span>spotLight1</span></div>
<div class="orow" style="top:223px"><span>pCylinder1</span></div>
<div class="orow" style="top:243px"><span>pCylinder2</span></div>
<div class="orow" style="top:263px"><span>pCylinder3</span></div>
<div class="orow" style="top:283px"><span>defaultLightSet</span></div>
<div class="orow" style="top:303px"><span>defaultObjectSet</span></div>
<!-- plus box -->
<div class="abs" style="left:51px;top:289px;width:11px;height:11px;border:1px solid #000"></div>
<div class="abs" style="left:53px;top:294px;width:7px;height:1px;background:#000"></div>
<div class="abs" style="left:56px;top:291px;width:1px;height:7px;background:#000"></div>
<!-- camera icons -->
<svg width="0" height="0"><defs>
<g id="cam"><path d="M0.800 5.500 H6" stroke="#101010" stroke-width="2.200"/><path d="M12 9 L19.500 4.500 L20 8 L16 11.500 L15.500 16 L12 18.500 Z" fill="#202020"/><circle cx="10.300" cy="5.800" r="4.800" fill="#8c8c8c" stroke="#101010" stroke-width="1.500"/><circle cx="8.300" cy="14" r="5.300" fill="#868686" stroke="#101010" stroke-width="1.500"/><path d="M9 3.500 L11.500 5.500 L9.500 8 Z" fill="#181818"/><path d="M7 12 L10 14 L7.500 16.500 Z" fill="#181818"/><path d="M4.500 9 L7.500 10.500" stroke="#101010" stroke-width="1.500"/><path d="M12.500 14.500 L17.500 7" stroke="#f4f4f4" stroke-width="1.100"/><path d="M2.500 12 Q2 16 4 18" stroke="#101010" stroke-width="1.400" fill="none"/></g>
<g id="mesh"><path d="M1 5.500 L12 1 L20 8 L9 15.500 Z" fill="#28a4f0" stroke="#0030b0" stroke-width="0.9"/><path d="M6.500 3.200 L14.500 11.800 M5 10.500 L16 4.500" stroke="#0030b0" stroke-width="1"/><path d="M1 5.500 L9 15.500 L20 8" stroke="#001088" stroke-width="1.500" fill="none"/></g>
<g id="lset"><circle cx="9.500" cy="9.500" r="8.500" fill="#fff" stroke="#000880" stroke-width="1.800"/><circle cx="7.500" cy="11.500" r="4.600" fill="#f8e800"/><path d="M8.500 6.500 Q9 3.500 12.500 3.500 Q14.500 6 12 9 Q10 8.500 8.500 6.500Z" fill="#1890f8"/></g>
</defs></svg>
<svg style="left:80px;top:123px" width="21" height="20"><use href="#cam"/></svg>
<svg style="left:80px;top:143px" width="21" height="20"><use href="#cam"/></svg>
<svg style="left:80px;top:163px" width="21" height="20"><use href="#cam"/></svg>
<svg style="left:80px;top:183px" width="21" height="20"><use href="#cam"/></svg>
<!-- spotlight icon -->
<svg style="left:82px;top:203px" width="19" height="19" viewBox="0 0 19 19"><path d="M1 1.500 L4 0.500 L9.500 6.500 L5.500 9.500 L1 4.500 Z" fill="#f4e400" stroke="#503800" stroke-width="0.9"/><path d="M5.500 9.500 L9.500 6.500 L15.500 11.500 L14 14 L9 16.500 Z" fill="#f8ec00" stroke="#503800" stroke-width="0.9"/><path d="M11 13 L15 12 L18 17.500 L14 16.500 Z" fill="#f8ec00" stroke="#503800" stroke-width="0.9"/><path d="M3.500 3.500 L8 8 M2 3 L5 2" stroke="#b06000" stroke-width="0.9"/><path d="M6 8 L9 6" stroke="#e04000" stroke-width="0.9"/></svg>
<svg style="left:80px;top:225px" width="21" height="17"><use href="#mesh"/></svg>
<svg style="left:80px;top:245px" width="21" height="17"><use href="#mesh"/></svg>
<svg style="left:80px;top:265px" width="21" height="17"><use href="#mesh"/></svg>
<svg style="left:81px;top:283px" width="20" height="20"><use href="#lset"/></svg>
<svg style="left:81px;top:303px" width="20" height="20"><use href="#lset"/></svg>
<!-- h scrollbar -->
<div class="abs" style="left:50px;top:516px;width:104px;height:16px;background:linear-gradient(#ececf2,#fafafc)"></div>
<div class="abs" style="left:50px;top:516px;width:16px;height:16px;border-radius:2px;border:1px solid #fff;background:linear-gradient(135deg,#f4f4f8,#b8b8cc);box-shadow:0 0 0 0.5px #a0a0b8"></div>
<svg style="left:54px;top:520px" width="8" height="9" viewBox="0 0 8 9"><path d="M6 0.8 L2 4.500 L6 8.200" stroke="#303038" stroke-width="2.200" fill="none"/></svg>
<div class="abs" style="left:67px;top:516px;width:16px;height:16px;border-radius:2px;border:1px solid #fff;background:linear-gradient(#f4f4f8,#c0c0d4);box-shadow:0 0 0 0.5px #a0a0b8"></div>
<svg style="left:71px;top:521px" width="8" height="7" viewBox="0 0 8 7"><path d="M0.5 0 V7 M2.500 0 V7 M4.500 0 V7 M6.500 0 V7" stroke="#50506a" stroke-width="0.9"/></svg>
<div class="abs" style="left:138px;top:516px;width:16px;height:16px;border-radius:2px;border:1px solid #fff;background:linear-gradient(135deg,#f4f4f8,#b8b8cc);box-shadow:0 0 0 0.5px #a0a0b8"></div>
<svg style="left:142px;top:520px" width="8" height="9" viewBox="0 0 8 9"><path d="M2 0.8 L6 4.500 L2 8.200" stroke="#303038" stroke-width="2.200" fill="none"/></svg>
<!-- viewport -->
<div id="vp" class="abs"></div>
<div id="vpi" class="abs">
<svg style="left:0;top:0" width="443" height="443" viewBox="169 96 443 443">
<defs>
<linearGradient id="gcyl" x1="0" x2="1" y1="0" y2="0"><stop offset="0" stop-color="#2c7436"/><stop offset="0.3" stop-color="#2a6c32"/><stop offset="0.45" stop-color="#28602e"/><stop offset="0.57" stop-color="#1f4624"/><stop offset="0.69" stop-color="#111f12"/><stop offset="0.8" stop-color="#000"/><stop offset="1" stop-color="#000"/></linearGradient>
<linearGradient id="wh" x1="0" x2="1" y1="0" y2="0"><stop offset="0" stop-color="#f8f8f8"/><stop offset="0.35" stop-color="#ececec"/><stop offset="0.6" stop-color="#c0c0c0" stop-opacity="0.9"/><stop offset="0.82" stop-color="#808080" stop-opacity="0.6"/><stop offset="1" stop-color="#404040" stop-opacity="0"/></linearGradient>
<linearGradient id="wv" x1="0" x2="1" y1="0" y2="0"><stop offset="0" stop-color="#d8e0d8"/><stop offset="0.3" stop-color="#fff"/><stop offset="0.7" stop-color="#f4f4f4"/><stop offset="1" stop-color="#a0b0a0"/></linearGradient>
<radialGradient id="ycap" cx="0.5" cy="0.35" r="0.65"><stop offset="0" stop-color="#f0f030"/><stop offset="0.45" stop-color="#d8d828"/><stop offset="0.8" stop-color="#a0a020"/><stop offset="1" stop-color="#707018"/></radialGradient>
<linearGradient id="ybody" x1="0" x2="0" y1="0" y2="1"><stop offset="0" stop-color="#909020"/><stop offset="0.3" stop-color="#505830"/><stop offset="0.55" stop-color="#181c14"/><stop offset="0.7" stop-color="#000"/><stop offset="1" stop-color="#000"/></linearGradient>
<filter id="bl1" x="-20%" y="-20%" width="140%" height="140%"><feGaussianBlur stdDeviation="0.6"/></filter>
<filter id="bl2" x="-20%" y="-20%" width="140%" height="140%"><feGaussianBlur stdDeviation="1.200"/></filter>
</defs>
<!-- green cylinder -->
<path d="M187 270 Q187 269 189 269 L207 270 Q232 272 251 279 L251 317 L187 317 Z" fill="url(#gcyl)"/>
<rect x="200" y="269.500" width="8" height="47.500" fill="url(#wv)"/>
<path d="M187 301.300 L215 301.500 L243 304 L215 307 L187 307 Z" fill="url(#wh)"/>
<!-- yellow cylinder -->
<rect x="393" y="289" width="32" height="28" fill="url(#ybody)"/>
<ellipse cx="409" cy="290" rx="16" ry="8.500" fill="url(#ycap)" filter="url(#bl1)"/>
<!-- grid line -->
<rect x="169" y="317" width="443" height="1" fill="#8c8c8c"/>
<circle cx="390.500" cy="317.500" r="54.300" fill="none" stroke="#40e0a0" stroke-width="1.250"/>
<!-- axis -->
<path d="M194.500 500 V506" stroke="#208040" stroke-width="1.200"/>
<path d="M191.500 490.500 L194.500 497 M197.500 490.500 L193 500.500" stroke="#20a040" stroke-width="1.400" fill="none"/>
<g fill="#40b0f0"><rect x="192" y="491" width="1" height="1"/><rect x="197" y="491" width="1" height="1"/><rect x="192.500" y="494" width="1" height="1"/><rect x="195.500" y="494" width="1" height="1"/><rect x="194" y="497" width="1" height="1"/><rect x="194" y="499" width="1" height="1"/></g>
<path d="M191 507 H197 L191 513 H197" stroke="#0000f0" stroke-width="1.700" fill="none"/>
<path d="M197 513.300 H207" stroke="#e00000" stroke-width="1.200"/>
<path d="M207.500 506.500 L213 513.500 M213 506.500 L207.500 513.500" stroke="#f00000" stroke-width="1.600"/>
</svg>
</div>
<!-- channel box handle -->
<svg style="left:620px;top:93px" width="180" height="8" viewBox="0 0 180 8" shape-rendering="crispEdges"><path d="M1 0 L5 3 L1 6 Z" fill="#404048" shape-rendering="auto"/><g fill="#62626c"><rect x="8" y="1" width="1" height="1"/><rect x="11" y="1" width="1" height="1"/><rect x="14" y="1" width="1" height="1"/><rect x="17" y="1" width="1" height="1"/><rect x="20" y="1" width="1" height="1"/><rect x="23" y="1" width="1" height="1"/><rect x="26" y="1" width="1" height="1"/><rect x="29" y="1" width="1" height="1"/><rect x="32" y="1" width="1" height="1"/><rect x="35" y="1" width="1" height="1"/><rect x="38" y="1" width="1" height="1"/><rect x="41" y="1" width="1" height="1"/><rect x="44" y="1" width="1" height="1"/><rect x="47" y="1" width="1" height="1"/><rect x="50" y="1" width="1" height="1"/><rect x="53" y="1" width="1" height="1"/><rect x="56" y="1" width="1" height="1"/><rect x="59" y="1" width="1" height="1"/><rect x="62" y="1" width="1" height="1"/><rect x="65" y="1" width="1" height="1"/><rect x="68" y="1" width="1" height="1"/><rect x="71" y="1" width="1" height="1"/><rect x="74" y="1" width="1" height="1"/><rect x="77" y="1" width="1" height="1"/><rect x="80" y="1" width="1" height="1"/><rect x="83" y="1" width="1" height="1"/><rect x="86" y="1" width="1" height="1"/><rect x="89" y="1" width="1" height="1"/><rect x="92" y="1" width="1" height="1"/><rect x="95" y="1" width="1" height="1"/><rect x="98" y="1" width="1" height="1"/><rect x="101" y="1" width="1" height="1"/><rect x="104" y="1" width="1" height="1"/><rect x="107" y="1" width="1" height="1"/><rect x="110" y="1" width="1" height="1"/><rect x="113" y="1" width="1" height="1"/><rect x="116" y="1" width="1" height="1"/><rect x="119" y="1" width="1" height="1"/><rect x="122" y="1" width="1" height="1"/><rect x="125" y="1" width="1" height="1"/><rect x="128" y="1" width="1" height="1"/><rect x="131" y="1" width="1" height="1"/><rect x="134" y="1" width="1" height="1"/><rect x="137" y="1" width="1" height="1"/><rect x="140" y="1" width="1" height="1"/><rect x="143" y="1" width="1" height="1"/><rect x="146" y="1" width="1" height="1"/><rect x="149" y="1" width="1" height="1"/><rect x="152" y="1" width="1" height="1"/><rect x="155" y="1" width="1" height="1"/><rect x="158" y="1" width="1" height="1"/><rect x="161" y="1" width="1" height="1"/><rect x="164" y="1" width="1" height="1"/><rect x="167" y="1" width="1" height="1"/><rect x="170" y="1" width="1" height="1"/><rect x="173" y="1" width="1" height="1"/><rect x="176" y="1" width="1" height="1"/><rect x="9" y="4" width="1" height="1"/><rect x="12" y="4" width="1" height="1"/><rect x="15" y="4" width="1" height="1"/><rect x="18" y="4" width="1" height="1"/><rect x="21" y="4" width="1" height="1"/><rect x="24" y="4" width="1" height="1"/><rect x="27" y="4" width="1" height="1"/><rect x="30" y="4" width="1" height="1"/><rect x="33" y="4" width="1" height="1"/><rect x="36" y="4" width="1" height="1"/><rect x="39" y="4" width="1" height="1"/><rect x="42" y="4" width="1" height="1"/><rect x="45" y="4" width="1" height="1"/><rect x="48" y="4" width="1" height="1"/><rect x="51" y="4" width="1" height="1"/><rect x="54" y="4" width="1" height="1"/><rect x="57" y="4" width="1" height="1"/><rect x="60" y="4" width="1" height="1"/><rect x="63" y="4" width="1" height="1"/><rect x="66" y="4" width="1" height="1"/><rect x="69" y="4" width="1" height="1"/><rect x="72" y="4" width="1" height="1"/><rect x="75" y="4" width="1" height="1"/><rect x="78" y="4" width="1" height="1"/><rect x="81" y="4" width="1" height="1"/><rect x="84" y="4" width="1" height="1"/><rect x="87" y="4" width="1" height="1"/><rect x="90" y="4" width="1" height="1"/><rect x="93" y="4" width="1" height="1"/><rect x="96" y="4" width="1" height="1"/><rect x="99" y="4" width="1" height="1"/><rect x="102" y="4" width="1" height="1"/><rect x="105" y="4" width="1" height="1"/><rect x="108" y="4" width="1" height="1"/><rect x="111" y="4" width="1" height="1"/><rect x="114" y="4" width="1" height="1"/><rect x="117" y="4" width="1" height="1"/><rect x="120" y="4" width="1" height="1"/><rect x="123" y="4" width="1" height="1"/><rect x="126" y="4" width="1" height="1"/><rect x="129" y="4" width="1" height="1"/><rect x="132" y="4" width="1" height="1"/><rect x="135" y="4" width="1" height="1"/><rect x="138" y="4" width="1" height="1"/><rect x="141" y="4" width="1" height="1"/><rect x="144" y="4" width="1" height="1"/><rect x="147" y="4" width="1" height="1"/><rect x="150" y="4" width="1" height="1"/><rect x="153" y="4" width="1" height="1"/><rect x="156" y="4" width="1" height="1"/><rect x="159" y="4" width="1" height="1"/><rect x="162" y="4" width="1" height="1"/><rect x="165" y="4" width="1" height="1"/><rect x="168" y="4" width="1" height="1"/><rect x="171" y="4" width="1" height="1"/><rect x="174" y="4" width="1" height="1"/><rect x="177" y="4" width="1" height="1"/></g></svg>
<!-- icon row -->
<div class="abs" style="left:620px;top:100px;width:22px;height:22px;background:#f4f4f6;border:1px solid;border-color:#a0a0a8 #fff #fff #a0a0a8"></div>
<svg style="left:623px;top:103px" width="17" height="17" viewBox="0 0 17 17" shape-rendering="crispEdges"><rect x="8" y="0" width="8" height="15" fill="#fff"/><path d="M0 1.500 H8 M0 5.500 H8 M0 9.500 H8 M0 13.500 H8 M10 1.500 H16 M10 5.500 H16 M10 9.500 H16 M10 13.500 H16" stroke="#000" stroke-width="1"/><path d="M8.500 0 V15" stroke="#000" stroke-width="1"/></svg>
<svg style="left:646px;top:103px" width="16" height="17" viewBox="0 0 16 17" shape-rendering="crispEdges"><rect x="3" y="0" width="4" height="4" fill="#d8f040" stroke="#000" stroke-width="1"/><rect x="3" y="6" width="4" height="4" fill="#f000e0" stroke="#000" stroke-width="1"/><rect x="3" y="12" width="4" height="4" fill="#f8e000" stroke="#000" stroke-width="1"/><path d="M0 2.500 H2 M0 8.500 H2 M0 14.500 H2 M9 2.500 H15 M9 8.500 H15 M9 14.500 H15" stroke="#000" stroke-width="1"/></svg>
<svg style="left:668px;top:103px" width="17" height="17" viewBox="0 0 17 17" shape-rendering="crispEdges"><rect x="9" y="0" width="8" height="8" fill="#fff"/><path d="M3 1.500 H16 M0 4.500 H16 M0 7.500 H16 M8 13.500 H16" stroke="#000" stroke-width="1"/><path d="M8.500 1 V8" stroke="#000" stroke-width="1"/><rect x="3" y="11" width="4" height="4" fill="#00d8f0" stroke="#000" stroke-width="1"/><path d="M0 13.500 H2" stroke="#000"/></svg>
<div class="abs rais" style="left:733px;top:100px;width:21px;height:23px;background:#e0dfe3"></div>
<div class="abs rais" style="left:755px;top:100px;width:21px;height:23px;background:#e0dfe3"></div>
<div class="abs rais" style="left:777px;top:100px;width:21px;height:23px;background:#e0dfe3"></div>
<svg style="left:736px;top:103px" width="17" height="17" viewBox="0 0 17 17"><path d="M9.500 4 V11" stroke="#00c000" stroke-width="1.600"/><path d="M7 5 L9.500 0.500 L12 5 Z" fill="#00d000"/><path d="M3 11 H9" stroke="#0000e0" stroke-width="1.800"/><path d="M5 8 L0.5 11 L5 14 Z" fill="#0000e0"/><path d="M10 11.500 L13 13.500" stroke="#e00000" stroke-width="1.800"/><circle cx="13.500" cy="13.500" r="2.500" fill="#e00000"/><circle cx="9.500" cy="11" r="1.800" fill="#fff" stroke="#000" stroke-width="0.9"/></svg>
<svg style="left:757px;top:103px" width="17" height="17" viewBox="0 0 17 17"><circle cx="8.500" cy="8.500" r="7.300" fill="#d8d8dc" stroke="#808088" stroke-width="2"/><path d="M8.500 3 A5.500 5.500 0 0 0 8.500 14 Q11 12 11 8.500 Q11 5 8.500 3 Z" fill="#808088"/></svg>
<svg style="left:780px;top:104px" width="16" height="15" viewBox="0 0 16 15"><path d="M1.500 13.500 L11 4" stroke="#808088" stroke-width="2.200"/><path d="M8 2 L15 0.5 L13.500 8 Z" fill="#808088"/></svg>
<!-- menu bar -->
<div class="abs" style="left:620px;top:124px;width:178px;height:19px;background:#fff"></div>
<div class="abs mn" style="left:624px;top:127px;font-size:12px;transform:scaleX(0.85)">Channels</div>
<div class="abs mn" style="left:677.500px;top:127px;font-size:12px;transform:scaleX(0.89)">Object</div>
<!-- list frame -->
<div class="abs" style="left:620px;top:144px;width:178px;height:384px;background:#e0dfe3;border:1px solid;border-color:#9090a0 #fff #fff #9090a0;border-left-width:2px"></div>
<div class="abs" style="left:622px;top:211px;width:157px;height:16px;background:#cfcfcf"></div>
<div class="chd" style="top:196px"><b style="transform:scaleX(0.897)">SHAPES</b></div>
<div class="chd" style="top:212px;padding-left:10.500px"><b style="transform:scaleX(1.031)">spotLightShape1</b></div>
<div class="chd" style="top:228px;padding-left:10.500px"><b style="transform:scaleX(1.025)">cameraShape1</b></div>
<div class="chd" style="top:452px"><b style="transform:scaleX(0.932)">OUTPUTS</b></div>
<div class="chd" style="top:468px;padding-left:10.500px"><b style="transform:scaleX(1.045)">defaultLightSet</b></div>
<div class="chd" style="top:484px;padding-left:10.500px"><b style="transform:scaleX(1.03)">lightList1</b></div>
<div class="abs" style="left:622px;top:515px;width:157px;height:1px;background:#b8b4a4"></div>
<div class="crow" style="top:148px"><span class="l">Scale Y</span><span class="v"><i>1</i></span></div>
<div class="crow" style="top:164px"><span class="l">Scale Z</span><span class="v"><i>1</i></span></div>
<div class="crow" style="top:180px"><span class="l">Visibility</span><span class="v"><i>on</i></span></div>
<div class="crow" style="top:244px"><span class="l">Color R</span><span class="v"><i>1</i></span></div>
<div class="crow" style="top:260px"><span class="l">Color G</span><span class="v"><i>1</i></span></div>
<div class="crow" style="top:276px"><span class="l">Color B</span><span class="v"><i>1</i></span></div>
<div class="crow" style="top:292px"><span class="l">Intensity</span><span class="v"><i>1</i></span></div>
<div class="crow" style="top:308px"><span class="l">Use Ray Trace S</span><span class="v"><i>off</i></span></div>
<div class="crow" style="top:324px"><span class="l">Shad Color R</span><span class="v"><i>0</i></span></div>
<div class="crow" style="top:340px"><span class="l">Shad Color G</span><span class="v"><i>0</i></span></div>
<div class="crow" style="top:356px"><span class="l">Shad Color B</span><span class="v"><i>0</i></span></div>
<div class="crow" style="top:372px"><span class="l">Use Depth Map S</span><span class="v"><i>off</i></span></div>
<div class="crow" style="top:388px"><span class="l">Dmap Bias</span><span class="v"><i>0.001</i></span></div>
<div class="crow" style="top:404px"><span class="l" style="color:#2838a8">Cone Angle</span><span class="v" style="color:#2838a8"><i>40</i></span></div>
<div class="abs" style="left:622px;top:420px;width:91px;height:15px;background:#181c18"></div>
<div class="crow" style="top:420px"><span class="l" style="color:#fff">Penumbra Angle</span><span class="v"><i>0</i></span></div>
<div class="crow" style="top:436px"><span class="l" style="color:#2838a8">Dropoff</span><span class="v" style="color:#3848b0"><i>0</i></span></div>
<div class="abs" style="left:622px;top:195px;width:157px;height:1px;background:#000"></div>
<div class="abs" style="left:622px;top:451px;width:157px;height:1px;background:#000"></div>
<!-- value column closing lines -->
<!-- v scrollbar -->
<div class="abs" style="left:780px;top:147px;width:16px;height:378px;background:linear-gradient(90deg,#ececf2,#fafafc)"></div>
<div class="abs" style="left:780px;top:147px;width:16px;height:16px;border-radius:2px;border:1px solid #fff;background:linear-gradient(135deg,#f4f4f8,#b8b8cc);box-shadow:0 0 0 0.5px #a0a0b8"></div>
<svg style="left:784px;top:152px" width="9" height="7" viewBox="0 0 9 7"><path d="M0.8 5.500 L4.500 1.800 L8.200 5.500" stroke="#303038" stroke-width="2.200" fill="none"/></svg>
<div class="abs" style="left:780px;top:253px;width:16px;height:256px;border-radius:2px;border:1px solid #fff;background:linear-gradient(90deg,#f4f4f8,#c0c0d4);box-shadow:0 0 0 0.5px #a0a0b8"></div>
<svg style="left:785px;top:378px" width="7" height="8" viewBox="0 0 7 8"><path d="M0 0.5 H7 M0 2.500 H7 M0 4.500 H7 M0 6.500 H7" stroke="#50506a" stroke-width="0.9"/></svg>
<div class="abs" style="left:780px;top:510px;width:16px;height:15px;border-radius:2px;border:1px solid #fff;background:linear-gradient(135deg,#f4f4f8,#b8b8cc);box-shadow:0 0 0 0.5px #a0a0b8"></div>
<svg style="left:784px;top:514px" width="9" height="7" viewBox="0 0 9 7"><path d="M0.8 1.500 L4.500 5.200 L8.200 1.500" stroke="#303038" stroke-width="2.200" fill="none"/></svg>
<div class="abs" style="left:778px;top:148px;width:1px;height:368px;background:#c4c0b0"></div>
<!-- bottom buttons -->
<div class="abs" style="left:620px;top:529px;width:89px;height:14px;background:#e0dfe3;border:1px solid;border-color:#fbfbf0 #78788c #78788c #fbfbf0"></div>
<div class="abs" style="left:710px;top:529px;width:88px;height:14px;background:#e0dfe3;border:1px solid;border-color:#fbfbf0 #78788c #78788c #fbfbf0"></div>
<svg style="left:658px;top:532px" width="12" height="8" viewBox="0 0 12 8"><path d="M4.500 0.500 L1 4 L4.500 7.500 M10.500 0.500 L7 4 L10.500 7.500" stroke="#000" stroke-width="1" fill="none"/></svg>
<svg style="left:748px;top:532px" width="12" height="8" viewBox="0 0 12 8"><path d="M1.500 0.500 L5 4 L1.500 7.500 M7.500 0.500 L11 4 L7.500 7.500" stroke="#000" stroke-width="1" fill="none"/></svg>
<!-- bottom area -->
<div class="abs" style="left:4px;top:544px;width:795px;height:4px;background:#e8e8ec"></div>
<svg style="left:5px;top:549px" width="10" height="20" viewBox="0 0 10 20"><path d="M0.5 1 H7.500 L4 5 Z" fill="#404048"/><g fill="#5c5c66" shape-rendering="crispEdges"><rect x="2" y="7" width="1" height="1"/><rect x="5" y="9" width="1" height="1"/><rect x="2" y="10" width="1" height="1"/><rect x="5" y="12" width="1" height="1"/><rect x="2" y="13" width="1" height="1"/><rect x="5" y="15" width="1" height="1"/><rect x="2" y="16" width="1" height="1"/><rect x="5" y="18" width="1" height="1"/></g></svg>
<div class="abs" style="left:14px;top:548px;width:784px;height:22px;background:#e0dfe3;border:1px solid;border-color:#9c9ca6 #fff #fff #9c9ca6;border-left-width:2px;border-top-width:2px"></div>
<!-- marker overlays -->
<svg style="left:0;top:0" width="803" height="575" viewBox="0 0 803 575">
<defs><filter id="mk" x="-10%" y="-10%" width="120%" height="120%"><feGaussianBlur stdDeviation="0.7"/></filter></defs>
<!-- penumbra ellipse -->
<path d="M644 408.500 C655 406 675 405.500 695 406.500 C715 408 737 415 738 421 C738 428 722 437 703 441.500 C685 446 665 447 652 444.500 C638 441 630.500 434 630.500 426.500 C631 417 640 410 656 407.500" fill="none" stroke="#4456e0" stroke-opacity="0.86" stroke-width="7.500" stroke-linecap="round" stroke-linejoin="round" filter="url(#mk)"/>
<!-- spotLight blob -->
<path d="M362 505.500 Q385 500.500 408 508 Q425 513 424.500 518 Q422 531 402 539 Q378 546.500 358 543 Q345.500 538 346 524 Q348.500 510 362 505.500 Z" fill="#ffff99" stroke="#2c3cc4" stroke-width="7.500" stroke-linejoin="round" filter="url(#mk)"/>
<path d="M364 510 Q386 505 406 512 Q418 516 418.500 519.500 Q415 529 400 535 Q378 541.500 360 538.500 Q351.500 534 352 524 Q354 514 364 510 Z" fill="none" stroke="#6880f0" stroke-width="3.500" stroke-opacity="0.9" filter="url(#mk)"/>
</svg>
<div class="abs" style="left:355.500px;top:522px;font-weight:bold;font-size:11px;color:#00dc00;transform:scaleX(1.04);transform-origin:0 0">spotLight1</div>
<div class="bl"></div><div class="br"></div><div class="bb"></div>
<div class="abs" style="left:0;top:1px;width:2px;height:21px;background:rgba(70,70,100,0.45)"></div><div class="abs" style="left:2px;top:1px;width:1px;height:21px;background:rgba(255,255,255,0.5)"></div><div class="abs" style="left:801px;top:1px;width:2px;height:21px;background:rgba(70,70,100,0.45)"></div>
<!-- corners -->
<svg style="left:0;top:0" width="803" height="6" viewBox="0 0 803 6"><path d="M0 0 H6 Q1 1 0 6 Z" fill="#000"/><path d="M803 0 H797 Q802 1 803 6 Z" fill="#000"/></svg>
</div>
</body></html>
